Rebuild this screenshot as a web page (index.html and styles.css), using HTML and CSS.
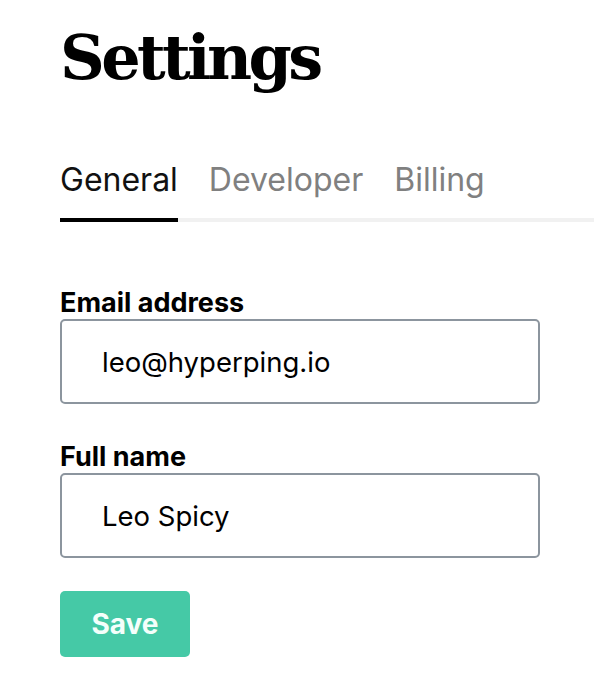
FILE: index.html
```html
<!DOCTYPE html>
<html lang="en">
<head>
<meta charset="utf-8">
<title>Settings</title>
<link rel="stylesheet" href="styles.css">
</head>
<body>
<main class="page">
  <h1 class="title">Settings</h1>
  <nav class="tabs">
    <a class="tab tab-active">General</a>
    <a class="tab">Developer</a>
    <a class="tab">Billing</a>
  </nav>
  <form class="form">
    <div class="field">
      <label class="label">Email address</label>
      <div class="input">leo@hyperping.io</div>
    </div>
    <div class="field">
      <label class="label">Full name</label>
      <div class="input">Leo Spicy</div>
    </div>
    <button type="button" class="btn">Save</button>
  </form>
</main>
</body>
</html>
```

FILE: styles.css
```css
* { box-sizing: border-box; }
html, body { margin: 0; padding: 0; background: #fff; }
body { font-family: Inter, "Liberation Sans", sans-serif; color: #000; }
.page { padding: 18px 0 0 60px; }
.title {
  margin: 0;
  font-family: "DejaVu Serif", "Liberation Serif", serif;
  font-weight: 700;
  font-size: 62px;
  line-height: 80px;
  letter-spacing: -3.6px;
}
.tabs {
  display: flex;
  gap: 31px;
  margin-top: 62px;
  border-bottom: 4px solid #f1f1f1;
}
.tab {
  font-size: 32px;
  color: #808080;
  padding-bottom: 18px;
  margin-bottom: -4px;
  border-bottom: 4px solid transparent;
  line-height: 40px;
}
.tab-active { color: #111; border-bottom-color: #000; }
.form { width: 480px; margin-top: 66px; }
.field { margin-bottom: 38px; }
.label { display: block; font-weight: 700; font-size: 27px; line-height: 30px; margin-bottom: 1px; }
.input {
  height: 85px;
  border: 2px solid #8c959e;
  border-radius: 5px;
  padding: 0 40px;
  display: flex;
  align-items: center;
  font-size: 27.5px;
}
.btn {
  display: block;
  margin-top: -5px;
  width: 130px;
  height: 66px;
  border: 0;
  border-radius: 5px;
  background: #45c9a6;
  color: #f4fffb;
  font-family: Inter, "Liberation Sans", sans-serif;
  font-weight: 700;
  font-size: 28px;
}
```
